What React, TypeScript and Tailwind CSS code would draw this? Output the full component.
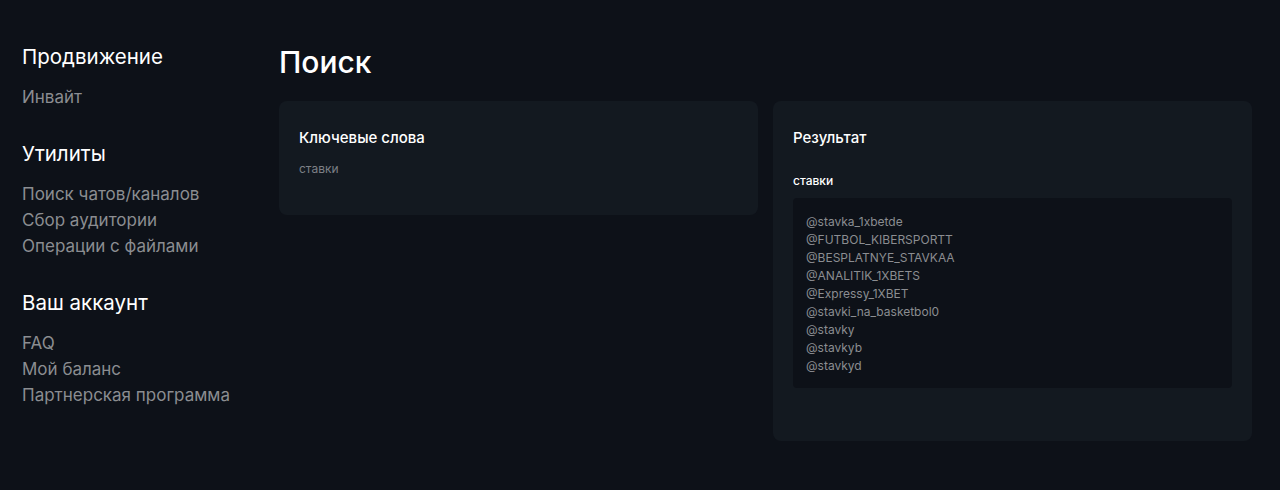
import { useState } from 'react';

const sections = [
  { title: 'Продвижение', items: ['Инвайт'] },
  { title: 'Утилиты', items: ['Поиск чатов/каналов', 'Сбор аудитории', 'Операции с файлами'] },
  { title: 'Ваш аккаунт', items: ['FAQ', 'Мой баланс', 'Партнерская программа'] },
];

const results = [
  '@stavka_1xbetde',
  '@FUTBOL_KIBERSPORTT',
  '@BESPLATNYE_STAVKAA',
  '@ANALITIK_1XBETS',
  '@Expressy_1XBET',
  '@stavki_na_basketbol0',
  '@stavky',
  '@stavkyb',
  '@stavkyd',
];

function Sidebar() {
  return (
    <aside className="w-[279px] shrink-0 pl-[22px] pt-[43px]">
      {sections.map((s) => (
        <div key={s.title} className="mb-[30px]">
          <h3 className="text-[20.5px] leading-[28px] text-white mb-[13px]">{s.title}</h3>
          <ul>
            {s.items.map((it) => (
              <li key={it}>
                <a href="#" className="text-[17px] leading-[26px] text-[#8b8d91] hover:text-white">
                  {it}
                </a>
              </li>
            ))}
          </ul>
        </div>
      ))}
    </aside>
  );
}

export default function App() {
  const [keyword] = useState('ставки');

  return (
    <div className="min-h-[490px] bg-[#0d1118] flex font-['Inter',sans-serif] antialiased">
      <Sidebar />
      <main className="flex-1 pr-[28px] pt-[44px]">
        <h1 className="text-[30px] leading-[36px] font-medium text-white">Поиск</h1>
        <div className="mt-[21px] grid grid-cols-2 gap-[15px] items-start">
          {/* Ключевые слова */}
          <div className="bg-[#131920] rounded-lg px-5 pt-[25px] pb-[36px]">
            <h2 className="text-[15px] leading-6 font-medium text-white">Ключевые слова</h2>
            <p className="mt-[9px] text-[12px] leading-5 text-[#7d8086]">{keyword}</p>
          </div>

          {/* Результат */}
          <div className="bg-[#131920] rounded-lg px-5 pt-[25px] pb-[53px]">
            <h2 className="text-[15px] leading-6 font-medium text-white">Результат</h2>
            <p className="mt-[21px] text-[12px] leading-5 font-medium text-white">{keyword}</p>
            <div className="mt-[7px] bg-[#0d1118] rounded px-[13px] pt-[15px] pb-[13px]">
              {results.map((r) => (
                <div key={r} className="text-[12px] leading-[18px] text-[#8b8d91]">
                  {r}
                </div>
              ))}
            </div>
          </div>
        </div>
      </main>
    </div>
  );
}
